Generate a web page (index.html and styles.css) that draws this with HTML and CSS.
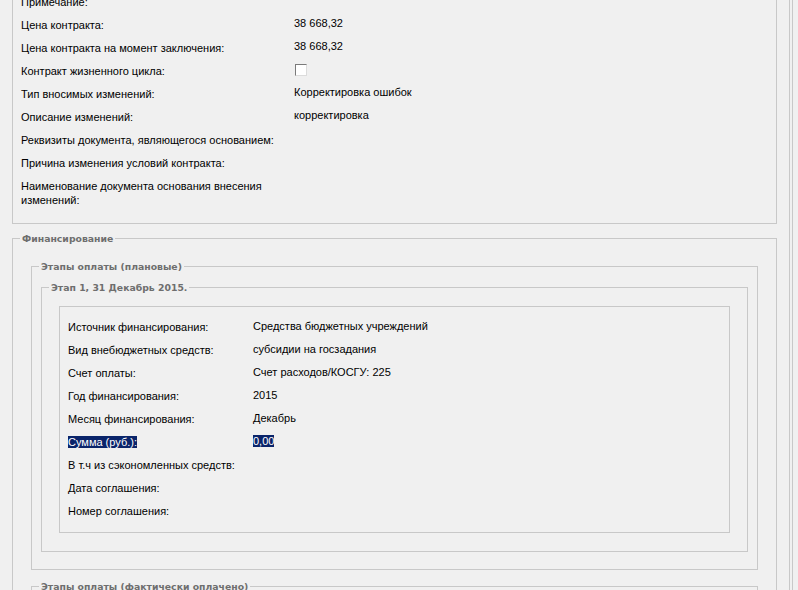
FILE: index.html
```html
<!DOCTYPE html>
<html lang="ru">
<head>
<meta charset="utf-8">
<title>Контракт</title>
<link rel="stylesheet" href="styles.css">
</head>
<body>
<div class="page">
  <div class="box top-box">
    <div class="row"><span class="label">Примечание:</span><span class="value"></span></div>
    <div class="row"><span class="label">Цена контракта:</span><span class="value">38 668,32</span></div>
    <div class="row"><span class="label">Цена контракта на момент заключения:</span><span class="value">38 668,32</span></div>
    <div class="row"><span class="label">Контракт жизненного цикла:</span><span class="value"><span class="checkbox"></span></span></div>
    <div class="row"><span class="label">Тип вносимых изменений:</span><span class="value">Корректировка ошибок</span></div>
    <div class="row"><span class="label">Описание изменений:</span><span class="value">корректировка</span></div>
    <div class="row"><span class="label">Реквизиты документа, являющегося основанием:</span><span class="value"></span></div>
    <div class="row"><span class="label">Причина изменения условий контракта:</span><span class="value"></span></div>
    <div class="row"><span class="label label-wrap">Наименование документа основания внесения изменений:</span><span class="value"></span></div>
  </div>

  <fieldset class="fs fs-finance">
    <legend>Финансирование</legend>
    <div class="fs-body finance-body">
      <fieldset class="fs fs-stages">
        <legend>Этапы оплаты (плановые)</legend>
        <div class="fs-body stages-body">
          <fieldset class="fs fs-stage">
            <legend>Этап 1, 31 Декабрь 2015.</legend>
            <div class="fs-body stage-body">
              <div class="box inner-box">
                <div class="row"><span class="label">Источник финансирования:</span><span class="value">Средства бюджетных учреждений</span></div>
                <div class="row"><span class="label">Вид внебюджетных средств:</span><span class="value">субсидии на госзадания</span></div>
                <div class="row"><span class="label">Счет оплаты:</span><span class="value">Счет расходов/КОСГУ: 225</span></div>
                <div class="row"><span class="label">Год финансирования:</span><span class="value">2015</span></div>
                <div class="row"><span class="label">Месяц финансирования:</span><span class="value">Декабрь</span></div>
                <div class="row"><span class="label"><span class="selected">Сумма (руб.):</span></span><span class="value"><span class="selected">0,00</span></span></div>
                <div class="row"><span class="label">В т.ч из сэкономленных средств:</span><span class="value"></span></div>
                <div class="row"><span class="label">Дата соглашения:</span><span class="value"></span></div>
                <div class="row"><span class="label">Номер соглашения:</span><span class="value"></span></div>
              </div>
            </div>
          </fieldset>
        </div>
      </fieldset>

      <fieldset class="fs fs-stages">
        <legend>Этапы оплаты (фактически оплачено)</legend>
        <div class="fs-body stages-body">
          <div class="placeholder"></div>
        </div>
      </fieldset>
    </div>
  </fieldset>
</div>
</body>
</html>
```

FILE: styles.css
```css
html {
  overflow: hidden;
}

body {
  margin: 0;
  background: #f0f0f0;
  font-family: "Liberation Sans", Arial, sans-serif;
  font-size: 11px;
  color: #000;
}

.page {
  width: 765px;
  padding: 0 12px;
  margin-top: -19px;
  border-right: 4px double #c8c8c8;
}

.box {
  border: 1px solid #c8c8c8;
}

.top-box {
  padding: 8px 8px 16px 8px;
}

.row {
  display: grid;
  grid-template-columns: 273px 1fr;
  min-height: 23px;
  line-height: 14px;
}

.label {
  padding-top: 5px;
}

.label-wrap {
  max-width: 250px;
}

.value {
  padding-top: 3px;
}

.checkbox {
  display: inline-block;
  width: 10px;
  height: 10px;
  margin: 2px 0 0 1px;
  background: #fff;
  border: 1px solid;
  border-color: #7a7a7a #dcdcdc #dcdcdc #7a7a7a;
  vertical-align: top;
}

.fs {
  margin: 0;
  padding: 0;
  min-width: 0;
  border: 1px solid #c8c8c8;
}

.fs legend {
  margin-left: 7px;
  padding: 0 2px;
  font-family: "DejaVu Sans", Verdana, sans-serif;
  font-size: 9.3px;
  font-weight: bold;
  line-height: 15px;
  color: #6e6e6e;
}

.fs-finance {
  margin-top: 7px;
}

.finance-body {
  padding: 13px 18px 18px;
}

.fs-stages + .fs-stages {
  margin-top: 9px;
}

.stages-body {
  padding: 6px 9px 17px;
}

.stage-body {
  padding: 11px 17px 18px;
}

.inner-box {
  padding: 8px 8px 10px;
}

.inner-box .row {
  grid-template-columns: 185px 1fr;
}

.inner-box .value {
  padding-top: 4px;
}

.selected {
  background: #0a246a;
  color: #fff;
}

.placeholder {
  height: 120px;
}
```
